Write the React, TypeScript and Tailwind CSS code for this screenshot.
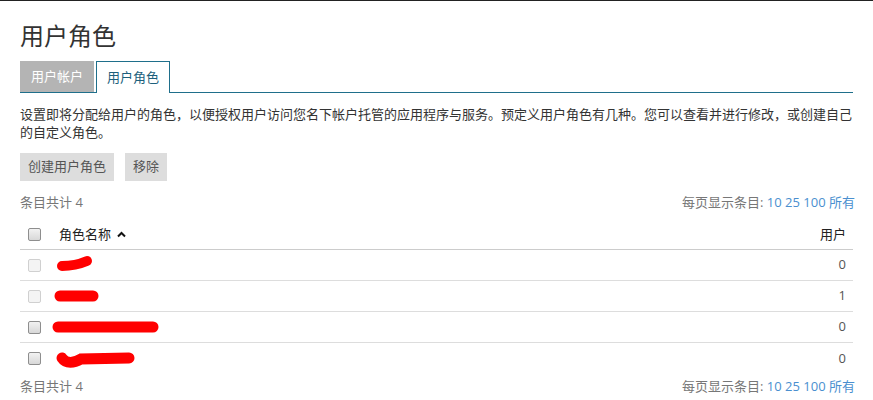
import React from "react";

function Box({ disabled }: { disabled?: boolean }) {
  return disabled ? (
    <div className="w-[13px] h-[13px] rounded-[2px] border border-[#d0d0d0] bg-[#f4f4f4]" />
  ) : (
    <div className="w-[13px] h-[13px] rounded-[2px] border border-[#8e8e8e] bg-gradient-to-b from-[#f2f2f2] to-[#d8d8d8]" />
  );
}

const rows = [
  { disabled: true, users: "0", d: "M12 16 C20 16 30 14 37 11", w: 10 },
  { disabled: true, users: "1", d: "M10 15 L43 15", w: 11 },
  { disabled: false, users: "0", d: "M8 15 L103 15", w: 11 },
  { disabled: false, users: "0", d: "M12 15 C16 21 24 20 31 16 L79 15", w: 11 },
];

function Pager() {
  return (
    <div className="flex justify-between items-center h-[18px] text-[13px] text-[#777]">
      <span>条目共计 4</span>
      <span className="-mr-[2px]">
        每页显示条目: <span className="text-[#4a8fcf]">10 25 100 所有</span>
      </span>
    </div>
  );
}

export default function App() {
  return (
    <div className="w-[873px] h-[400px] overflow-hidden bg-white border-t border-[#222] font-['Open_Sans','Noto_Sans_CJK_SC',sans-serif]">
      <div className="px-5">
        <h1 className="mt-[19px] h-[32px] leading-[32px] text-[24px] text-[#333] font-normal">用户角色</h1>
        <div className="mt-[9px] flex gap-[2px] border-b border-[#1f6f8b] h-[32px]">
          <div className="w-[74px] h-[31px] bg-[#b4b4b4] text-white text-[13px] flex items-center justify-center">用户帐户</div>
          <div className="w-[74px] h-[32px] -mb-px bg-white border border-b-0 border-[#1f6f8b] text-[#1d5f7c] text-[13px] flex items-center justify-center">用户角色</div>
        </div>
        <p className="mt-[12px] text-[13px] leading-[18px] text-[#333] whitespace-nowrap">
          设置即将分配给用户的角色，以便授权用户访问您名下帐户托管的应用程序与服务。预定义用户角色有几种。您可以查看并进行修改，或创建自己
          <br />
          的自定义角色。
        </p>
        <div className="mt-[12px] flex gap-[11px]">
          <button className="h-[28px] px-[8px] bg-[#dddddd] text-[13px] text-[#555]">创建用户角色</button>
          <button className="h-[28px] px-[8px] bg-[#dddddd] text-[13px] text-[#555]">移除</button>
        </div>
        <div className="mt-[13px]">
          <Pager />
        </div>
        <div className="mt-[8px]">
          <div className="flex items-center h-[30px] border-b border-[#cccccc] text-[13px] text-[#222]">
            <div className="w-[30px] pl-2 flex items-center"><Box /></div>
            <div className="flex-1 pl-[9px] flex items-center gap-[6px]">
              <span>角色名称</span>
              <svg width="9" height="7" viewBox="0 0 9 7"><path d="M1 5.5 L4.5 2 L8 5.5" stroke="#111" strokeWidth="2" fill="none" /></svg>
            </div>
            <div className="pr-[7px]">用户</div>
          </div>
          {rows.map((r, i) => (
            <div key={i} className={`flex items-center h-[31px] text-[13px] ${i < rows.length - 1 ? "border-b border-[#dddddd]" : ""}`}>
              <div className="w-[30px] pl-2 flex items-center"><Box disabled={r.disabled} /></div>
              <div className="flex-1 h-full">
                <svg width="120" height="30" viewBox="0 0 120 30">
                  <path d={r.d} stroke="#ff0000" strokeWidth={r.w} strokeLinecap="round" fill="none" />
                </svg>
              </div>
              <div className="pr-[7px] text-[#555]">{r.users}</div>
            </div>
          ))}
        </div>
        <div className="mt-[4px]">
          <Pager />
        </div>
      </div>
    </div>
  );
}
